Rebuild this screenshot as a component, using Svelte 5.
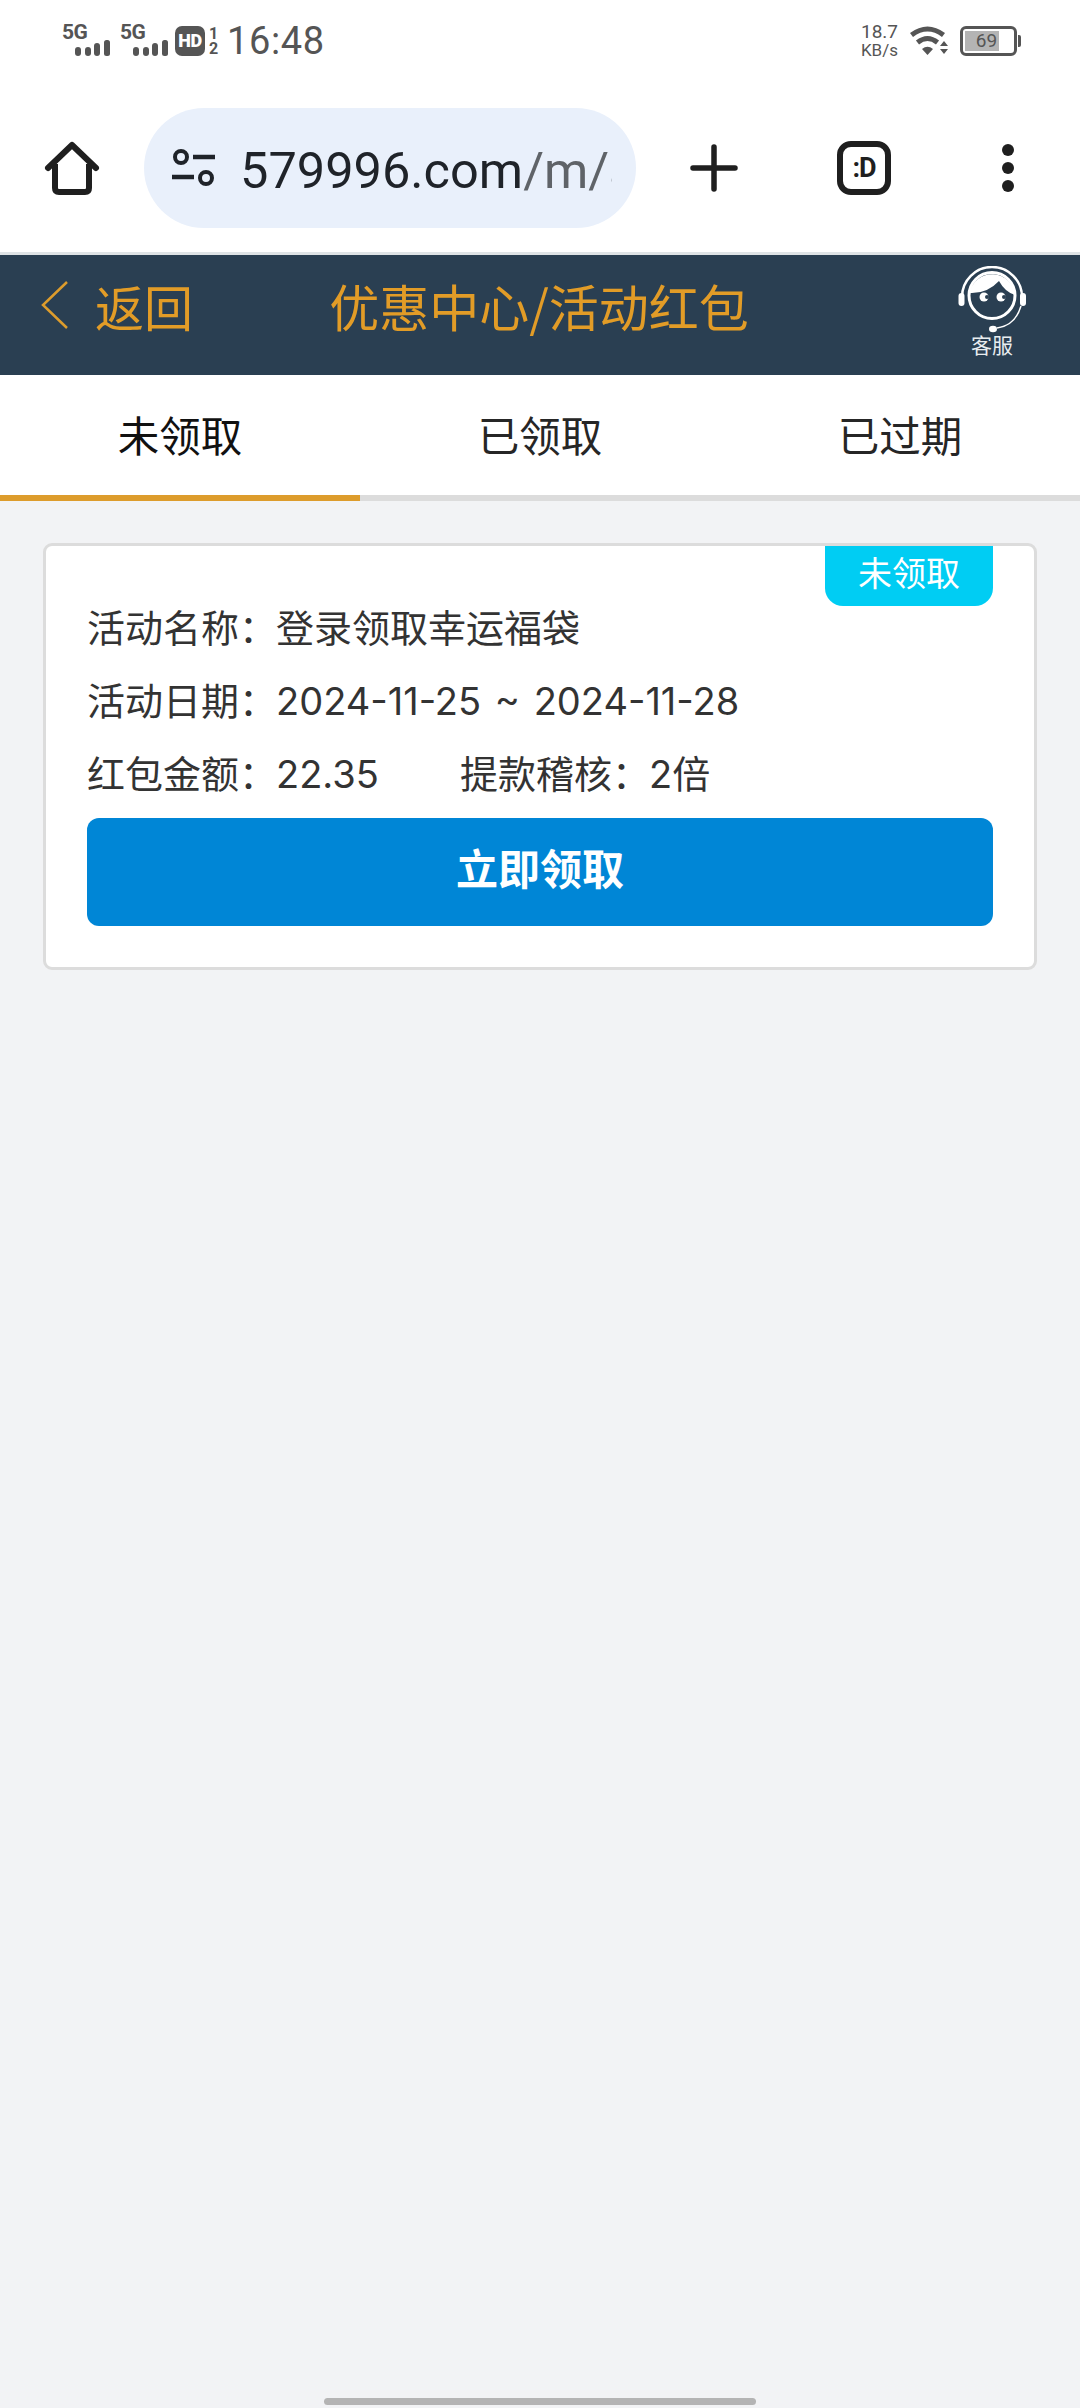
<script lang="ts">
  const tabs = ["未领取", "已领取", "已过期"];
  const activeTab = 0;
</script>

{#snippet signal()}
  <div class="signal">
    <span class="net">5G</span>
    <svg width="35" height="17" viewBox="0 0 35 17"><g fill="#555"><rect x="0" y="7" width="6" height="9" rx="3"/><rect x="10" y="7" width="6" height="9" rx="3"/><rect x="19" y="3" width="6" height="13" rx="3"/><rect x="29" y="0" width="6" height="16" rx="2.5"/></g></svg>
  </div>
{/snippet}

<div class="page">
  <div class="status">
    <div class="status-left">
      {@render signal()}
      {@render signal()}
      <span class="hd">HD</span>
      <span class="hd-nums"><span>1</span><span>2</span></span>
      <span class="time">16:48</span>
    </div>
    <div class="status-right">
      <div class="speed"><span>18.7</span><span class="unit">KB/s</span></div>
      <svg class="wifi" width="38" height="30" viewBox="0 0 38 30">
        <path d="M1.5 9 Q17.5 -3 33.5 9" fill="none" stroke="#555" stroke-width="5"/>
        <path d="M7.5 16.5 Q17.5 8.5 27.5 16.5" fill="none" stroke="#555" stroke-width="5"/>
        <path d="M12 23 Q17.5 18.5 23 23 L17.5 29Z" fill="#555"/>
        <path d="M34 15 L38 20 L30 20Z M30 23 L38 23 L34 28Z" fill="#555"/>
      </svg>
      <div class="battery">
        <div class="battery-body">
          <div class="battery-fill"></div>
          <span class="battery-num">69</span>
        </div>
        <div class="battery-cap"></div>
      </div>
    </div>
  </div>

  <div class="toolbar">
    <svg class="home" width="56" height="56" viewBox="0 0 56 56">
      <path d="M4 28 L28 5 L52 28" fill="none" stroke="#1f1f1f" stroke-width="6" stroke-linecap="round" stroke-linejoin="round"/>
      <path d="M11 24 V48 Q11 52 15 52 H41 Q45 52 45 48 V24" fill="none" stroke="#1f1f1f" stroke-width="6"/>
    </svg>
    <div class="url">
      <svg width="46" height="40" viewBox="0 0 46 40">
        <circle cx="11" cy="9" r="6" fill="none" stroke="#1f2329" stroke-width="4"/>
        <path d="M23 9 H45" stroke="#1f2329" stroke-width="4.5"/>
        <circle cx="36" cy="30" r="6" fill="none" stroke="#1f2329" stroke-width="4"/>
        <path d="M2 29 H24" stroke="#1f2329" stroke-width="4.5"/>
      </svg>
      <div class="url-text">579996.com<span class="url-path">/m/a</span></div>
    </div>
    <svg class="plus" width="48" height="48" viewBox="0 0 48 48">
      <path d="M24 3 V45 M3 24 H45" stroke="#1f1f1f" stroke-width="5.5" stroke-linecap="round"/>
    </svg>
    <div class="tab-count"><span>:D</span></div>
    <div class="dots"><i></i><i></i><i></i></div>
  </div>

  <div class="header">
    <div class="back">
      <svg width="28" height="50" viewBox="0 0 28 50">
        <path d="M26 2 L2 25 L26 48" fill="none" stroke="#dd9c2c" stroke-width="2.5"/>
      </svg>
      <span>返回</span>
    </div>
    <div class="title">优惠中心/活动红包</div>
    <div class="service">
      <svg width="70" height="70" viewBox="0 0 70 70">
        <path d="M5 31 A30 30 0 0 1 65 31" fill="none" stroke="#fff" stroke-width="2.5"/>
        <circle cx="35" cy="29.5" r="23" fill="none" stroke="#fff" stroke-width="3"/>
        <path d="M12.5 27 A23 23 0 0 1 58 29 Q48 26 42 15 Q30 28 12.5 27Z" fill="#fff"/>
        <circle cx="27" cy="31" r="4.5" fill="#fff"/>
        <circle cx="44" cy="31" r="4.5" fill="#fff"/>
        <circle cx="30" cy="31" r="2" fill="#2a3f52"/>
        <circle cx="47" cy="31" r="2" fill="#2a3f52"/>
        <rect x="1.5" y="27" width="6" height="13" rx="3" fill="#fff"/>
        <rect x="63" y="27" width="6" height="13" rx="3" fill="#fff"/>
        <path d="M64 40 Q58 60 40 62" fill="none" stroke="#fff" stroke-width="1.5"/>
        <ellipse cx="36" cy="63" rx="4" ry="3.2" fill="#fff"/>
      </svg>
      <span>客服</span>
    </div>
  </div>

  <div class="tabs">
    {#each tabs as tab, i}
      <div class="tab" class:active={i === activeTab}>{tab}</div>
    {/each}
  </div>

  <div class="card">
    <div class="badge">未领取</div>
    <div class="row"><span class="label">活动名称：</span><span>登录领取幸运福袋</span></div>
    <div class="row"><span class="label">活动日期：</span><span class="date">2024-11-25 ~ 2024-11-28</span></div>
    <div class="row">
      <span class="label">红包金额：</span><span class="amount">22.35</span><span class="label">提款稽核：</span><span>2倍</span>
    </div>
    <div class="claim">立即领取</div>
  </div>

  <div class="home-bar"></div>
</div>

<style>
  :global(body) {
    margin: 0;
    background: #f2f3f5;
  }

  .page {
    min-height: 2408px;
    display: flex;
    flex-direction: column;
    font-family: Roboto, "Noto Sans CJK SC", sans-serif;
  }

  .status {
    height: 74px;
    background: #fff;
    display: flex;
    justify-content: space-between;
    align-items: center;
    padding: 8px 59px 0 62px;
    box-sizing: border-box;
    color: #555;
  }

  .status-left,
  .status-right {
    display: flex;
    align-items: center;
  }

  .signal {
    width: 58px;
    height: 32px;
    position: relative;
  }

  .signal svg {
    position: absolute;
    left: 13px;
    bottom: 0;
  }

  .net {
    position: absolute;
    top: -5px;
    left: 0;
    font-size: 21px;
    font-weight: 700;
    letter-spacing: -0.5px;
  }

  .hd {
    width: 30px;
    height: 30px;
    margin-left: -3px;
    border-radius: 7px;
    background: #555;
    color: #fff;
    font-size: 18px;
    font-weight: 900;
    line-height: 30px;
    text-align: center;
    letter-spacing: -0.5px;
  }

  .hd-nums {
    display: flex;
    flex-direction: column;
    font-size: 16px;
    font-weight: 700;
    line-height: 15px;
    margin-left: 2px;
    width: 13px;
    align-items: center;
  }

  .time {
    font-size: 38px;
    letter-spacing: 0.6px;
    margin-left: 7px;
  }

  .speed {
    display: flex;
    flex-direction: column;
    align-items: center;
    font-size: 19px;
    line-height: 18px;
  }

  .speed .unit {
    font-size: 17px;
  }

  .wifi {
    margin-left: 12px;
  }

  .battery {
    display: flex;
    align-items: center;
    margin-left: 12px;
  }

  .battery-body {
    width: 57px;
    height: 30px;
    box-sizing: border-box;
    border: 3px solid #555;
    border-radius: 6px;
    position: relative;
    padding: 2px;
  }

  .battery-fill {
    width: 34px;
    height: 100%;
    background: #b4b4b4;
  }

  .battery-num {
    position: absolute;
    inset: 0;
    font-size: 19px;
    line-height: 24px;
    text-align: center;
    padding-right: 4px;
  }

  .battery-cap {
    width: 3px;
    height: 12px;
    background: #555;
    margin-left: 1px;
    border-radius: 0 2px 2px 0;
  }

  .toolbar {
    height: 178px;
    background: #fff;
    display: flex;
    align-items: center;
    box-sizing: border-box;
    padding-top: 10px;
  }

  .home {
    margin-left: 44px;
    flex: none;
  }

  .url {
    width: 492px;
    height: 120px;
    margin-left: 44px;
    flex: none;
    background: #e9f0fb;
    border-radius: 60px;
    display: flex;
    align-items: center;
    box-sizing: border-box;
    padding: 0 24px 0 26px;
    gap: 24px;
  }

  .url svg {
    flex: none;
  }

  .url-text {
    font-size: 50.5px;
    color: #1f2329;
    white-space: nowrap;
    overflow: hidden;
    flex: 1;
    padding-top: 4px;
  }

  .url-path {
    color: #5f6368;
  }

  .plus {
    margin-left: 54px;
    flex: none;
  }

  .tab-count {
    width: 54px;
    height: 54px;
    margin-left: 99px;
    box-sizing: border-box;
    border: 6px solid #1f1f1f;
    border-radius: 14px;
    display: flex;
    align-items: center;
    justify-content: center;
    color: #1f1f1f;
    font-size: 27px;
    font-weight: 700;
    letter-spacing: -1px;
    flex: none;
  }

  .dots {
    display: flex;
    flex-direction: column;
    gap: 6px;
    margin-left: 111px;
  }

  .dots i {
    width: 12px;
    height: 12px;
    border-radius: 50%;
    background: #1f1f1f;
  }

  .header {
    height: 120px;
    background: #2a3f52;
    border-top: 3px solid #dfe3e6;
    display: grid;
    grid-template-columns: 1fr auto 1fr;
    color: #e29c27;
    font-size: 49px;
  }

  .back {
    display: flex;
    align-items: center;
    gap: 26px;
    padding: 0 0 20px 41px;
  }

  .title {
    font-family: "Noto Sans CJK SC", sans-serif;
    font-size: 50px;
    line-height: 100px;
    margin-left: -2px;
  }

  .service {
    justify-self: end;
    margin-right: 53px;
    padding-top: 11px;
    display: flex;
    flex-direction: column;
    align-items: center;
    color: #e8edf0;
    font-size: 21px;
    line-height: 24px;
  }

  .service svg {
    display: block;
    margin-bottom: -2px;
  }

  .tabs {
    display: grid;
    grid-template-columns: repeat(3, 1fr);
    background: #fff;
  }

  .tab {
    height: 115px;
    padding-top: 5px;
    line-height: 115px;
    text-align: center;
    font-size: 41.5px;
    color: #262626;
    border-bottom: 6px solid #dcdcdc;
  }

  .tab.active {
    color: #111;
    border-bottom-color: #dd9c2c;
  }

  .card {
    position: relative;
    margin: 42px 43px 0;
    border: 3px solid #dcdcdc;
    border-radius: 9px;
    background: #fff;
    padding: 46px 41px 41px;
    font-size: 38px;
    color: #333;
    font-family: Inter, "Noto Sans CJK SC", sans-serif;
  }

  .badge {
    position: absolute;
    top: 0;
    right: 41px;
    width: 168px;
    height: 60px;
    border-radius: 0 0 18px 18px;
    background: #00cdf3;
    color: #fff;
    font-size: 34px;
    line-height: 56px;
    text-align: center;
  }

  .row {
    display: flex;
    line-height: 73px;
    white-space: nowrap;
  }

  .label {
    width: 189px;
    flex: none;
  }

  .date {
    word-spacing: 3px;
  }

  .amount {
    width: 184px;
    flex: none;
  }

  .claim {
    height: 108px;
    margin-top: 7px;
    border-radius: 12px;
    background: #0086d6;
    color: #fff;
    font-size: 42px;
    font-weight: 700;
    line-height: 104px;
    text-align: center;
  }

  .home-bar {
    width: 432px;
    height: 7px;
    margin: auto auto 3px;
    border-radius: 4px;
    background: #b4b4b4;
  }
</style>
